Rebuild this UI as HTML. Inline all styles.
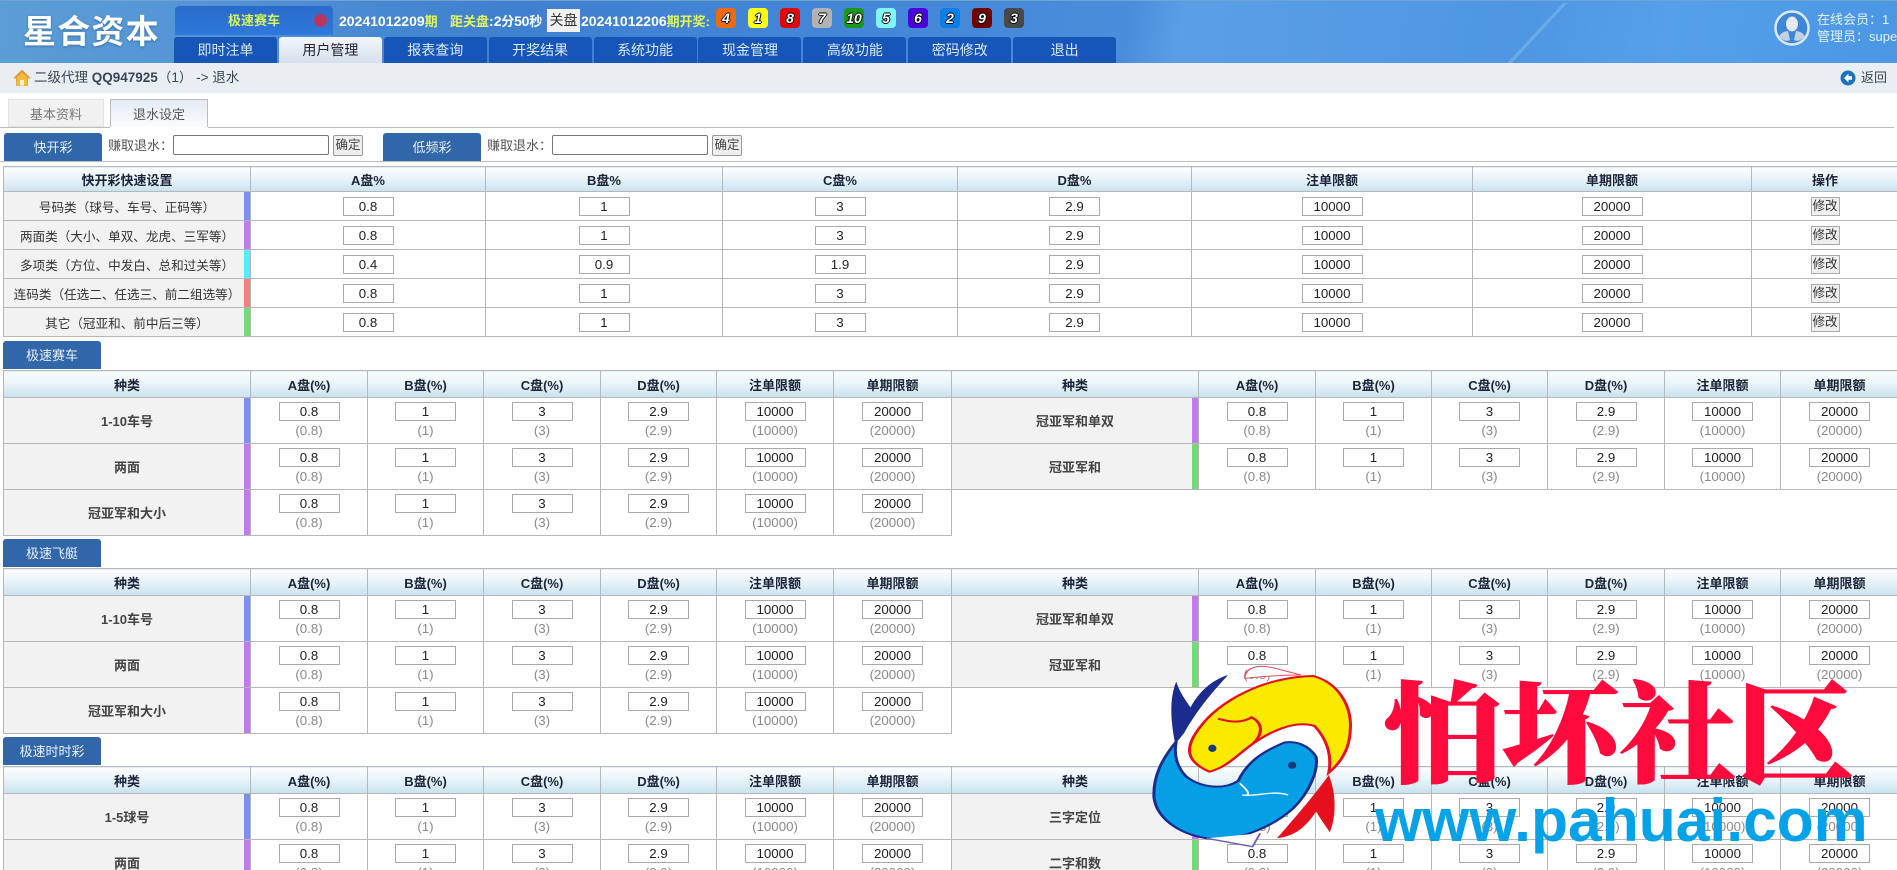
<!DOCTYPE html>
<html lang="zh"><head><meta charset="utf-8"><title>星合资本</title>
<style>
html,body{margin:0;padding:0;width:1897px;height:870px;overflow:hidden;background:#fff}
body{position:relative;font:13px "Liberation Sans","Noto Sans CJK SC",sans-serif;color:#333}
.a{position:absolute;white-space:nowrap}
#hd{left:0;top:0;width:1897px;height:63px;background:linear-gradient(100deg,#5b9dd5 0,#5596d6 170px,#3f80cf 500px,#4385d6 800px,#4a8ddb 1115px,#5a9fe6 1170px,#4f96e2 1500px,#55a0e8 1650px,#4a96e4 1897px);border-top:1px solid #6fa3d3;box-sizing:border-box}
#logo{left:23px;top:11px;font-size:33px;line-height:42px;font-weight:700;color:#fff;letter-spacing:1.2px;text-shadow:0 1px 2px rgba(30,70,120,.5)}
#lot{left:175px;top:6px;width:158px;height:29px;background:linear-gradient(#2a6bc9,#2f78dc);border-radius:4px 4px 0 0}
#lot b{position:absolute;left:53px;top:0;line-height:30px;font-size:13px;color:#d6f45c}
#lot i{position:absolute;left:139px;top:8px;width:13px;height:13px;border-radius:50%;background:#b9375f}
.inf{top:11px;line-height:20px;font-size:14px;font-weight:700;color:#fff}
.inf em{font-style:normal;color:#e4f55c;font-size:13px}
.inf u{text-decoration:none;font-size:13px}
#cls{left:547px;top:9px;width:33px;height:23px;background:#f1f1f1;color:#333;font-size:14px;line-height:23px;text-align:center}
.ball{top:8px;width:20px;height:20px;border-radius:4px;text-align:center;font:italic 700 14px/20px "Liberation Sans",sans-serif;color:#fff;text-shadow:-1px 0 #000,1px 0 #000,0 -1px #000,0 1px #000}
#nav{left:174px;top:37px;display:flex}
#nav div{width:103px;height:26px;margin-right:1.9px;background:#1556b8;border-radius:3px 3px 0 0;color:#dce8f8;text-align:center;font-size:14px;line-height:26px}
#nav div.on{background:linear-gradient(#f3f6fb,#d6e0ee);color:#223}
#bc{left:0;top:63px;width:1897px;height:30px;background:#e9eef3}
#bct{left:34px;top:68px;line-height:20px;font-size:13.5px;color:#3a4658}
#ret{left:1861px;top:68px;line-height:20px;font-size:13px;color:#3a4658}
.tb{top:99px;height:28px;box-sizing:border-box;text-align:center;line-height:30px;font-size:13px}
.hr{left:0;height:1px;background:#bdbdbd}
.btn{background:#3166a9;color:#e8f0fa;text-align:center;border-radius:3px 3px 0 0;height:28px;line-height:29px;font-size:13px;width:98px}
.lb{top:135px;line-height:21px;font-size:13px;color:#555}
.ip{top:135px;height:20px;box-sizing:border-box;border:1px solid #777;border-radius:2px;background:#fff;width:156px}
.ok{top:135px;width:30px;height:21px;box-sizing:border-box;border:1px solid #999;border-radius:2px;background:#efefef;font-size:12.5px;line-height:19px;text-align:center;color:#444}
table{position:absolute;border-collapse:collapse;table-layout:fixed}
th,td{border:1px solid #b7b7b7;padding:0;text-align:center;overflow:hidden}
th{background:linear-gradient(#fbfdfe 0,#eaf4f9 45%,#c8e2f0 100%);font-size:13px;font-weight:700;color:#1b2438}
td.n{background:#f2f2f2;color:#333;position:relative}
td.n b{color:#444}
td.n i{position:absolute;right:0;top:0;bottom:0;width:6px}
.c1{background:#7e90ee}.c2{background:#c07aea}.c3{background:#52eeff}.c4{background:#f08282}.c5{background:#76d876}
td input{box-sizing:border-box;height:19px;border:1px solid #aaa;padding:0;margin:0;background:#fff;text-align:center;font:13.3px "Liberation Sans",sans-serif;color:#222;vertical-align:middle;display:block;margin:0 auto}
.q td.n{font-size:12.6px}
.q input{width:51px}
.q input.w{width:61px}
.q td{height:28px}
.m input{width:61px}
.m td.n{font-size:13px;font-weight:500}
.m span{display:block;font-size:13.3px;line-height:19px;color:#8a8a8a;margin-top:0}
.m td{height:45px}
.m th{height:26px}
.q th{height:24px}
.mod{display:block;margin:0 auto;width:29px;height:19px;box-sizing:border-box;border:1px solid #aaa;background:#efefef;font-size:12.5px;line-height:17px;color:#333}
#wm{position:absolute;left:0;top:0;width:1897px;height:870px;pointer-events:none}
</style></head><body>
<div class="a" id="hd"></div>
<svg class="a" style="left:1480px;top:0" width="240" height="63"><polygon points="27,63 32,63 87,3 83,3" fill="#7db9ef" opacity=".55"/></svg>
<div class="a" id="logo">星合资本</div>
<div class="a" id="lot"><b>极速赛车</b><i></i></div>
<div class="a inf" style="left:339px">20241012209<em>期</em></div>
<div class="a inf" style="left:450px"><em>距关盘</em>:<span style="letter-spacing:-.2px">2<u>分</u>50<u>秒</u></span></div>
<div class="a" id="cls">关盘</div>
<div class="a inf" style="left:581px">20241012206<em>期开奖:</em></div>
<div class="a ball" style="left:716px;background:#ee6a12">4</div>
<div class="a ball" style="left:748px;background:#ffff14">1</div>
<div class="a ball" style="left:780px;background:#e00808">8</div>
<div class="a ball" style="left:812px;background:#b2b2b2">7</div>
<div class="a ball" style="left:844px;background:#1a991a">10</div>
<div class="a ball" style="left:876px;background:#7ff6f6">5</div>
<div class="a ball" style="left:908px;background:#4a00d8">6</div>
<div class="a ball" style="left:940px;background:#0c7ee8">2</div>
<div class="a ball" style="left:972px;background:#6e0404">9</div>
<div class="a ball" style="left:1004px;background:#484848">3</div>
<div class="a" id="nav"><div>即时注单</div><div class="on">用户管理</div><div>报表查询</div><div>开奖结果</div><div>系统功能</div><div>现金管理</div><div>高级功能</div><div>密码修改</div><div>退出</div></div>
<svg class="a" style="left:1772px;top:8px" width="40" height="40" viewBox="0 0 40 40"><circle cx="20" cy="20" r="16.5" fill="#3d87d6" stroke="#dbe9f7" stroke-width="2.5"/><ellipse cx="20" cy="16" rx="6" ry="7.5" fill="#e6e8f2"/><path d="M7 28c3-4 7-5 9-5l2 9c-3 2-8 0-11-4zM33 28c-3-4-7-5-9-5l-2 9c3 2 8 0 11-4z" fill="#c3d2e2"/></svg>
<div class="a" style="left:1817px;top:11px;line-height:17px;font-size:13px;color:#e3f0fb">在线会员：1<br>管理员：super</div>
<div class="a" id="bc"></div>
<svg class="a" style="left:13px;top:69px" width="18" height="18" viewBox="0 0 18 18"><path d="M9 1L1 9h2.5v7.5h11V9H17z" fill="#f3bb3a" stroke="#d08a1a" stroke-width=".6"/><path d="M7 16.5V11h4v5.5z" fill="#fff3c8"/><path d="M9 1L1 9h2L9 3.5 15 9h2z" fill="#e8983a"/></svg>
<div class="a" id="bct">二级代理 <b style="font-weight:700">QQ947925</b>（1） -&gt; 退水</div>
<svg class="a" style="left:1840px;top:70px" width="16" height="16" viewBox="0 0 16 16"><circle cx="8" cy="8" r="7.5" fill="#1c74b8"/><path d="M8.5 3.5L4 8l4.5 4.5V9.8H12V6.2H8.5z" fill="#fff"/></svg>
<div class="a" id="ret">返回</div>
<div class="a tb" style="left:8px;width:96px;background:#f1f1f1;border:1px solid #e4e4e4;color:#777">基本资料</div>
<div class="a tb" style="left:110px;width:98px;background:linear-gradient(#e4ebf5,#fbfcfe);border:1px solid #bbb;border-bottom:0;color:#555">退水设定</div>
<div class="a hr" style="top:127px;width:110px"></div><div class="a hr" style="top:127px;left:208px;width:1686px"></div>
<div class="a btn" style="left:4px;top:133px">快开彩</div>
<div class="a lb" style="left:108px">赚取退水：</div><div class="a ip" style="left:173px"></div><div class="a ok" style="left:333px">确定</div>
<div class="a btn" style="left:383px;top:133px">低频彩</div>
<div class="a lb" style="left:487px">赚取退水：</div><div class="a ip" style="left:552px"></div><div class="a ok" style="left:712px">确定</div>
<div class="a hr" style="top:161px;width:1897px"></div>

<table class="q" style="left:3px;top:166px;width:1895px">
<colgroup><col style="width:247px"><col style="width:235px"><col style="width:237px"><col style="width:235px"><col style="width:234px"><col style="width:281px"><col style="width:279px"><col style="width:147px"></colgroup>
<tr><th>快开彩快速设置</th><th>A盘%</th><th>B盘%</th><th>C盘%</th><th>D盘%</th><th>注单限额</th><th>单期限额</th><th>操作</th></tr>
<tr><td class="n">号码类（球号、车号、正码等）<i class="c1"></i></td><td><input value="0.8"></td><td><input value="1"></td><td><input value="3"></td><td><input value="2.9"></td><td><input class="w" value="10000"></td><td><input class="w" value="20000"></td><td><span class="mod">修改</span></td></tr>
<tr><td class="n">两面类（大小、单双、龙虎、三军等）<i class="c2"></i></td><td><input value="0.8"></td><td><input value="1"></td><td><input value="3"></td><td><input value="2.9"></td><td><input class="w" value="10000"></td><td><input class="w" value="20000"></td><td><span class="mod">修改</span></td></tr>
<tr><td class="n">多项类（方位、中发白、总和过关等）<i class="c3"></i></td><td><input value="0.4"></td><td><input value="0.9"></td><td><input value="1.9"></td><td><input value="2.9"></td><td><input class="w" value="10000"></td><td><input class="w" value="20000"></td><td><span class="mod">修改</span></td></tr>
<tr><td class="n">连码类（任选二、任选三、前二组选等）<i class="c4"></i></td><td><input value="0.8"></td><td><input value="1"></td><td><input value="3"></td><td><input value="2.9"></td><td><input class="w" value="10000"></td><td><input class="w" value="20000"></td><td><span class="mod">修改</span></td></tr>
<tr><td class="n">其它（冠亚和、前中后三等）<i class="c5"></i></td><td><input value="0.8"></td><td><input value="1"></td><td><input value="3"></td><td><input value="2.9"></td><td><input class="w" value="10000"></td><td><input class="w" value="20000"></td><td><span class="mod">修改</span></td></tr>
</table>

<div class="a btn" style="left:3px;top:341px">极速赛车</div>
<table class="m" style="left:3px;top:370px;width:948px">
<colgroup><col style="width:247px"><col style="width:117px"><col style="width:116px"><col style="width:117px"><col style="width:116px"><col style="width:117px"><col style="width:118px"></colgroup>
<tr><th>种类</th><th>A盘(%)</th><th>B盘(%)</th><th>C盘(%)</th><th>D盘(%)</th><th>注单限额</th><th>单期限额</th></tr>
<tr><td class="n"><b>1-10车号</b><i class="c1"></i></td><td><input value="0.8"><span>(0.8)</span></td><td><input value="1"><span>(1)</span></td><td><input value="3"><span>(3)</span></td><td><input value="2.9"><span>(2.9)</span></td><td><input value="10000"><span>(10000)</span></td><td><input value="20000"><span>(20000)</span></td></tr>
<tr><td class="n"><b>两面</b><i class="c2"></i></td><td><input value="0.8"><span>(0.8)</span></td><td><input value="1"><span>(1)</span></td><td><input value="3"><span>(3)</span></td><td><input value="2.9"><span>(2.9)</span></td><td><input value="10000"><span>(10000)</span></td><td><input value="20000"><span>(20000)</span></td></tr>
<tr><td class="n"><b>冠亚军和大小</b><i class="c2"></i></td><td><input value="0.8"><span>(0.8)</span></td><td><input value="1"><span>(1)</span></td><td><input value="3"><span>(3)</span></td><td><input value="2.9"><span>(2.9)</span></td><td><input value="10000"><span>(10000)</span></td><td><input value="20000"><span>(20000)</span></td></tr>
</table>
<table class="m" style="left:951px;top:370px;width:947px">
<colgroup><col style="width:247px"><col style="width:117px"><col style="width:116px"><col style="width:116px"><col style="width:117px"><col style="width:116px"><col style="width:118px"></colgroup>
<tr><th>种类</th><th>A盘(%)</th><th>B盘(%)</th><th>C盘(%)</th><th>D盘(%)</th><th>注单限额</th><th>单期限额</th></tr>
<tr><td class="n"><b>冠亚军和单双</b><i class="c2"></i></td><td><input value="0.8"><span>(0.8)</span></td><td><input value="1"><span>(1)</span></td><td><input value="3"><span>(3)</span></td><td><input value="2.9"><span>(2.9)</span></td><td><input value="10000"><span>(10000)</span></td><td><input value="20000"><span>(20000)</span></td></tr>
<tr><td class="n"><b>冠亚军和</b><i class="c5"></i></td><td><input value="0.8"><span>(0.8)</span></td><td><input value="1"><span>(1)</span></td><td><input value="3"><span>(3)</span></td><td><input value="2.9"><span>(2.9)</span></td><td><input value="10000"><span>(10000)</span></td><td><input value="20000"><span>(20000)</span></td></tr>
</table>

<div class="a btn" style="left:3px;top:539px">极速飞艇</div>
<table class="m" style="left:3px;top:568px;width:948px">
<colgroup><col style="width:247px"><col style="width:117px"><col style="width:116px"><col style="width:117px"><col style="width:116px"><col style="width:117px"><col style="width:118px"></colgroup>
<tr><th>种类</th><th>A盘(%)</th><th>B盘(%)</th><th>C盘(%)</th><th>D盘(%)</th><th>注单限额</th><th>单期限额</th></tr>
<tr><td class="n"><b>1-10车号</b><i class="c1"></i></td><td><input value="0.8"><span>(0.8)</span></td><td><input value="1"><span>(1)</span></td><td><input value="3"><span>(3)</span></td><td><input value="2.9"><span>(2.9)</span></td><td><input value="10000"><span>(10000)</span></td><td><input value="20000"><span>(20000)</span></td></tr>
<tr><td class="n"><b>两面</b><i class="c2"></i></td><td><input value="0.8"><span>(0.8)</span></td><td><input value="1"><span>(1)</span></td><td><input value="3"><span>(3)</span></td><td><input value="2.9"><span>(2.9)</span></td><td><input value="10000"><span>(10000)</span></td><td><input value="20000"><span>(20000)</span></td></tr>
<tr><td class="n"><b>冠亚军和大小</b><i class="c2"></i></td><td><input value="0.8"><span>(0.8)</span></td><td><input value="1"><span>(1)</span></td><td><input value="3"><span>(3)</span></td><td><input value="2.9"><span>(2.9)</span></td><td><input value="10000"><span>(10000)</span></td><td><input value="20000"><span>(20000)</span></td></tr>
</table>
<table class="m" style="left:951px;top:568px;width:947px">
<colgroup><col style="width:247px"><col style="width:117px"><col style="width:116px"><col style="width:116px"><col style="width:117px"><col style="width:116px"><col style="width:118px"></colgroup>
<tr><th>种类</th><th>A盘(%)</th><th>B盘(%)</th><th>C盘(%)</th><th>D盘(%)</th><th>注单限额</th><th>单期限额</th></tr>
<tr><td class="n"><b>冠亚军和单双</b><i class="c2"></i></td><td><input value="0.8"><span>(0.8)</span></td><td><input value="1"><span>(1)</span></td><td><input value="3"><span>(3)</span></td><td><input value="2.9"><span>(2.9)</span></td><td><input value="10000"><span>(10000)</span></td><td><input value="20000"><span>(20000)</span></td></tr>
<tr><td class="n"><b>冠亚军和</b><i class="c5"></i></td><td><input value="0.8"><span>(0.8)</span></td><td><input value="1"><span>(1)</span></td><td><input value="3"><span>(3)</span></td><td><input value="2.9"><span>(2.9)</span></td><td><input value="10000"><span>(10000)</span></td><td><input value="20000"><span>(20000)</span></td></tr>
</table>

<div class="a btn" style="left:3px;top:737px">极速时时彩</div>
<table class="m" style="left:3px;top:766px;width:948px">
<colgroup><col style="width:247px"><col style="width:117px"><col style="width:116px"><col style="width:117px"><col style="width:116px"><col style="width:117px"><col style="width:118px"></colgroup>
<tr><th>种类</th><th>A盘(%)</th><th>B盘(%)</th><th>C盘(%)</th><th>D盘(%)</th><th>注单限额</th><th>单期限额</th></tr>
<tr><td class="n"><b>1-5球号</b><i class="c1"></i></td><td><input value="0.8"><span>(0.8)</span></td><td><input value="1"><span>(1)</span></td><td><input value="3"><span>(3)</span></td><td><input value="2.9"><span>(2.9)</span></td><td><input value="10000"><span>(10000)</span></td><td><input value="20000"><span>(20000)</span></td></tr>
<tr><td class="n"><b>两面</b><i class="c2"></i></td><td><input value="0.8"><span>(0.8)</span></td><td><input value="1"><span>(1)</span></td><td><input value="3"><span>(3)</span></td><td><input value="2.9"><span>(2.9)</span></td><td><input value="10000"><span>(10000)</span></td><td><input value="20000"><span>(20000)</span></td></tr>
</table>
<table class="m" style="left:951px;top:766px;width:947px">
<colgroup><col style="width:247px"><col style="width:117px"><col style="width:116px"><col style="width:116px"><col style="width:117px"><col style="width:116px"><col style="width:118px"></colgroup>
<tr><th>种类</th><th>A盘(%)</th><th>B盘(%)</th><th>C盘(%)</th><th>D盘(%)</th><th>注单限额</th><th>单期限额</th></tr>
<tr><td class="n"><b>三字定位</b><i class="c2"></i></td><td><input value="0.8"><span>(0.8)</span></td><td><input value="1"><span>(1)</span></td><td><input value="3"><span>(3)</span></td><td><input value="2.9"><span>(2.9)</span></td><td><input value="10000"><span>(10000)</span></td><td><input value="20000"><span>(20000)</span></td></tr>
<tr><td class="n"><b>二字和数</b><i class="c5"></i></td><td><input value="0.8"><span>(0.8)</span></td><td><input value="1"><span>(1)</span></td><td><input value="3"><span>(3)</span></td><td><input value="2.9"><span>(2.9)</span></td><td><input value="10000"><span>(10000)</span></td><td><input value="20000"><span>(20000)</span></td></tr>
</table>

<svg id="wm" viewBox="0 0 1897 870">
<g transform="translate(1100,620) scale(.5084,.3333)">
<path d="M285 170C290 135 320 135 345 145L395 165C350 165 315 170 285 175Z" fill="#fff" stroke="#e8505f" stroke-width="3"/>
<path d="M215 455C170 425 165 385 195 325C235 240 325 170 420 168C470 190 497 260 492 335C490 390 472 430 450 458C457 405 445 355 422 318C380 298 330 340 300 372C272 402 250 442 215 455Z" fill="#f9ea00" stroke="#e60f1e" stroke-width="6"/>
<path d="M232 296C255 305 275 312 298 292C322 310 320 345 300 372" fill="none" stroke="#e60f1e" stroke-width="6"/>
<path d="M150 185C155 210 165 235 178 262C195 215 220 180 252 165C225 210 195 260 165 340L148 372C140 310 135 240 150 185Z" fill="#1b2c8e"/>
<path d="M150 365C120 420 105 470 106 530C110 590 150 640 210 655C270 668 340 620 380 565C410 520 430 455 425 410C410 375 385 362 362 368C320 395 290 425 272 482C245 510 200 505 170 470C150 440 145 400 150 365Z" fill="#059fe6" stroke="#1b2c8e" stroke-width="6"/>
<path d="M275 490C290 510 300 530 280 525C310 530 340 510 370 525" fill="none" stroke="#fff" stroke-width="4"/>
<path d="M210 655L300 680L315 640" fill="#fff" stroke="#6a5ec0" stroke-width="4"/>
<path d="M450 465C430 510 380 600 348 655C385 648 405 620 425 575C435 600 445 620 452 637C465 590 465 520 450 465Z" fill="#e60f1e"/>
<ellipse cx="221" cy="385" rx="8" ry="11" fill="#123a7c"/><ellipse cx="378" cy="436" rx="8" ry="11" fill="#123a7c"/>
</g>
<text x="1384" y="774" font-family="'Noto Serif CJK SC',serif" font-size="110" font-weight="900" fill="#ff0a3c" stroke="#ff0a3c" stroke-width="1" textLength="470" lengthAdjust="spacingAndGlyphs">怕坏社区</text>
<text x="1375" y="841" font-family="'Liberation Sans',sans-serif" font-size="60.6" font-weight="700" fill="#06a2e8">www.pahuai.com</text>
</svg>
</body></html>
